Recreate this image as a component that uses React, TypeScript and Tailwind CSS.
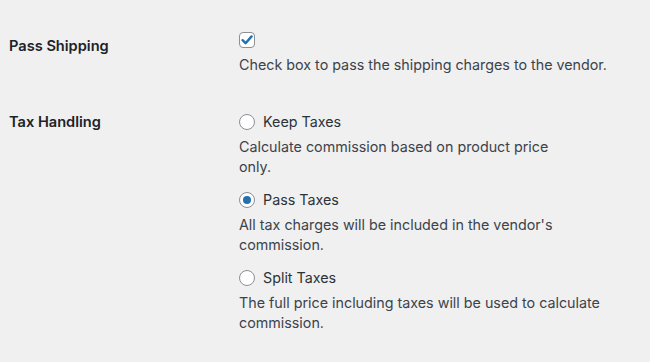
const font = { fontFamily: 'Inter, "Liberation Sans", sans-serif' };

function Radio({ checked }: { checked?: boolean }) {
  return (
    <span className="flex h-4 w-4 shrink-0 items-center justify-center rounded-full border border-[#8c8f94] bg-white">
      {checked && <span className="h-2 w-2 rounded-full bg-[#2271b1]" />}
    </span>
  );
}

const options = [
  { label: 'Keep Taxes', lines: ['Calculate commission based on product price', 'only.'] },
  { label: 'Pass Taxes', checked: true, lines: ["All tax charges will be included in the vendor's", 'commission.'] },
  { label: 'Split Taxes', lines: ['The full price including taxes will be used to calculate', 'commission.'] },
];

export default function App() {
  return (
    <div className="min-h-[362px] w-[650px] bg-[#f0f0f1] pl-[9px] pt-[32px] text-[14.3px]" style={font}>
      <div className="flex">
        <div className="w-[230px] pt-[4px] text-[14.6px] font-semibold leading-5 text-[#1d2327]">Pass Shipping</div>
        <div>
          <span className="flex h-4 w-4 items-center justify-center rounded-[4px] border border-[#8c8f94] bg-white">
            <svg width="12" height="12" viewBox="0 0 12 12">
              <path d="M1.6 6.2 L4.6 9.2 L10.6 2.4" fill="none" stroke="#2271b1" strokeWidth="2.4" strokeLinecap="round" strokeLinejoin="round" />
            </svg>
          </span>
          <p className="mt-[7px] leading-5 text-[#3c434a]">Check box to pass the shipping charges to the vendor.</p>
        </div>
      </div>

      <div className="mt-[37px] flex">
        <div className="w-[230px] text-[14.6px] font-semibold leading-5 text-[#1d2327]">Tax Handling</div>
        <div className="flex flex-col gap-[13px]">
          {options.map(o => (
            <div key={o.label}>
              <label className="flex h-5 items-center gap-[8px] text-[#2c3338]">
                <Radio checked={o.checked} />
                <span className="leading-5">{o.label}</span>
              </label>
              <p className="mt-[5px] leading-5 text-[#3c434a]">
                {o.lines.map(l => (
                  <span key={l} className="block whitespace-nowrap">{l}</span>
                ))}
              </p>
            </div>
          ))}
        </div>
      </div>
    </div>
  );
}
